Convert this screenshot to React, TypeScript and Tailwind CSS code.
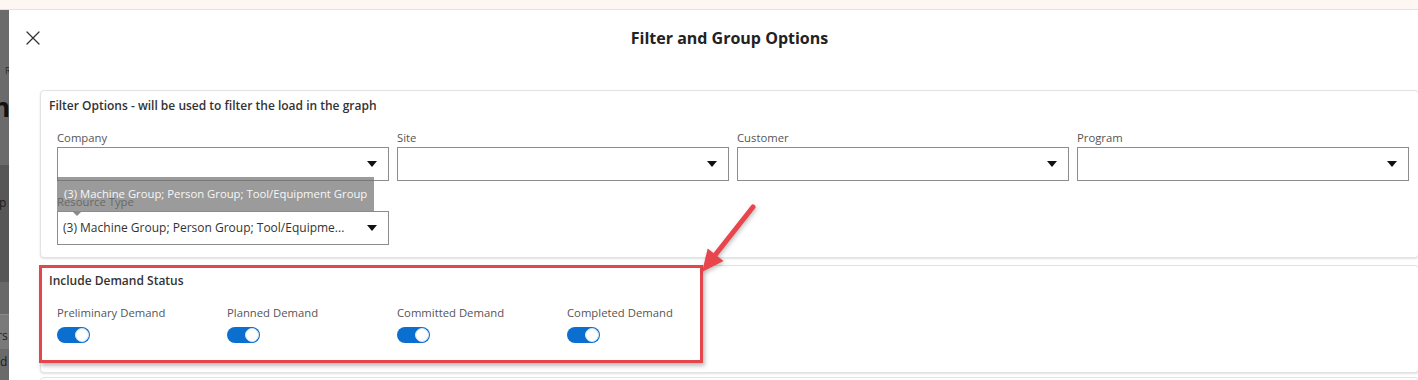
import { X } from 'lucide-react';

const filterFields = ['Company', 'Site', 'Customer', 'Program'];
const demandStatuses = ['Preliminary Demand', 'Planned Demand', 'Committed Demand', 'Completed Demand'];

function Caret() {
  return (
    <svg width="10" height="6" viewBox="0 0 10 6" className="shrink-0">
      <path d="M0 0 L10 0 L5 6 Z" fill="#111" />
    </svg>
  );
}

function SelectBox({ value }: { value?: string }) {
  return (
    <div className="flex h-[34px] items-center justify-between border border-[#8c8c8c] bg-white pl-[5px] pr-[11px]">
      <span className="truncate text-[12px] text-[#333]">{value}</span>
      <Caret />
    </div>
  );
}

function Toggle() {
  return (
    <div className="flex h-[16px] w-[33px] items-center justify-end rounded-full bg-[#0b6fcf] pr-px">
      <div className="h-[14px] w-[14px] rounded-full border border-[#d6e6f7] bg-white" />
    </div>
  );
}

function BackdropStrip() {
  return (
    <div className="flex w-[9px] shrink-0 flex-col overflow-hidden text-[#222]">
      <div className="relative h-[155px] bg-[#6b6b6b]">
        <span className="absolute left-[5px] top-[56px] text-[9px] leading-none text-[#2a2a2a]">R</span>
        <span className="absolute -left-[7px] top-[84px] text-[26px] font-bold leading-none text-[#111]">n</span>
      </div>
      <div className="relative h-[117px] bg-[#575757]">
        <span className="absolute -left-[1px] top-[32px] text-[12px] leading-none text-[#1a1a1a]">p</span>
      </div>
      <div className="h-[33px] border-b border-[#8a8a8a] bg-[#686868]" />
      <div className="relative h-[34px] bg-[#7a7a7a]">
        <span className="absolute -left-[3px] top-[15px] text-[12px] leading-none text-[#222]">rs</span>
      </div>
      <div className="relative flex-1 bg-[#6a6a6a]">
        <span className="absolute -left-[3px] top-[7px] text-[12px] leading-none text-[#1a1a1a]">id</span>
      </div>
    </div>
  );
}

export default function App() {
  return (
    <div
      className="relative flex h-[380px] w-[1418px] flex-col overflow-hidden bg-white"
      style={{ fontFamily: '"Open Sans", "Noto Sans", sans-serif' }}
    >
      {/* page behind the dialog */}
      <div className="h-[10px] shrink-0 border-b border-[#eadfd9] bg-[#fdf6f2]" />

      <div className="flex flex-1">
        <BackdropStrip />

        {/* dialog */}
        <div className="w-[1441px] shrink-0 bg-white">
          <div className="relative flex h-[56px] items-center justify-center">
            <button className="absolute left-[12px] top-[16px] text-[#333]" aria-label="Close">
              <X className="h-6 w-6" strokeWidth={1.3} />
            </button>
            <h1 className="text-[16px] font-bold text-[#222]">Filter and Group Options</h1>
          </div>

          <div className="mx-[31px] mt-[24px] flex flex-col">
            {/* Filter options */}
            <div className="relative rounded border border-[#e3e3e3] bg-white pb-3 pt-[7px] shadow-[0_1px_2px_rgba(0,0,0,0.12)]">
              <div className="pl-2 text-[12px] font-semibold leading-4 text-[#333]">
                Filter Options - will be used to filter the load in the graph
              </div>
              <div className="mt-4 grid grid-cols-[332px_332px_332px_332px] gap-x-2 pl-4">
                {filterFields.map((f) => (
                  <div key={f} className="flex flex-col gap-px">
                    <label className="text-[11.3px] leading-4 text-[#555]">{f}</label>
                    <SelectBox />
                  </div>
                ))}
              </div>
              <div className="mt-[13px] flex w-[348px] flex-col gap-px pl-4">
                <label className="text-[11.3px] leading-4 text-[#555]">Resource Type</label>
                <SelectBox value="(3) Machine Group; Person Group; Tool/Equipme..." />
              </div>

              {/* tooltip */}
              <div className="absolute left-4 top-[86px] flex h-[34px] w-[317px] items-center bg-[rgba(112,112,112,0.7)] pl-[7px]">
                <span className="whitespace-nowrap text-[11.3px] text-[#f7f7f7]">
                  (3) Machine Group; Person Group; Tool/Equipment Group
                </span>
                <div className="absolute left-[15px] top-[34px] h-0 w-0 border-x-[5px] border-t-[5px] border-x-transparent border-t-[#8a8a8a]" />
              </div>
            </div>

            {/* Demand status */}
            <div className="mt-[7px] rounded border border-[#e3e3e3] bg-white pb-[29px] pt-[7px] shadow-[0_1px_2px_rgba(0,0,0,0.12)]">
              <div className="pl-2 text-[12px] font-semibold leading-4 text-[#333]">Include Demand Status</div>
              <div className="mt-4 flex pl-4">
                {demandStatuses.map((s) => (
                  <div key={s} className="flex w-[170px] flex-col gap-[6px]">
                    <span className="text-[11.3px] leading-4 text-[#555]">{s}</span>
                    <Toggle />
                  </div>
                ))}
              </div>
            </div>

            <div className="mt-[4px] h-[20px] rounded border border-[#e3e3e3] bg-white" />
          </div>
        </div>
      </div>

      {/* annotation */}
      <div className="absolute left-[39px] top-[265px] h-[98px] w-[664px] border-[3px] border-[#e4464c] shadow-[2px_3px_4px_rgba(0,0,0,0.25)]" />
      <svg
        className="absolute left-0 top-0"
        width="1418"
        height="380"
        style={{ filter: 'drop-shadow(1px 2px 2px rgba(0,0,0,0.25))', pointerEvents: 'none' }}
      >
        <line x1="753" y1="207" x2="712" y2="259" stroke="#e8464c" strokeWidth="5" strokeLinecap="round" />
        <polygon points="702,272 707.7,248.5 723.5,260.9" fill="#e8464c" />
      </svg>
    </div>
  );
}
